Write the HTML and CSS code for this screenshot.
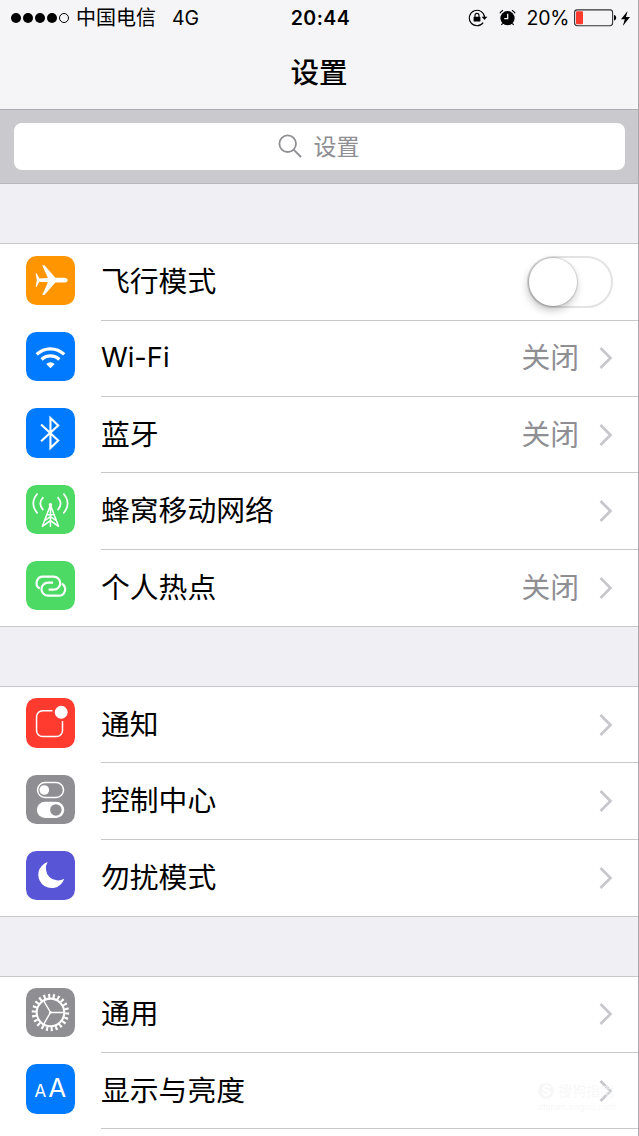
FILE: index.html
```html
<!DOCTYPE html>
<html lang="zh-CN">
<head>
  <meta charset="utf-8">
  <meta name="viewport" content="width=device-width, initial-scale=1.0">
  <title>设置</title>
  <link rel="stylesheet" href="styles.css">
</head>
<body>
<div class="phone">

  <!-- Status bar + title -->
  <header class="navbar">
    <div class="status">
      <div class="status-left">
        <span class="signal"><i></i><i></i><i></i><i></i><i class="empty"></i></span>
        <span class="carrier">中国电信</span>
        <span class="network">4G</span>
      </div>
      <span class="clock">20:44</span>
      <div class="status-right">
        <svg class="lock" width="20" height="18" viewBox="0 0 20 18">
          <path d="M15.2 13.6A7.7 7.7 0 1 1 16.7 8.6" fill="none" stroke="#000" stroke-width="1.1"/>
          <path d="M13.6 7.800h5.800l-2.900 3.200z"/>
          <rect x="5.600" y="7.800" width="6.800" height="4.800" rx=".6"/>
          <path d="M7 8V6.400a2 2 0 0 1 4 0V8" fill="none" stroke="#000" stroke-width="1.100"/>
        </svg>
        <svg class="alarm" width="17" height="18" viewBox="0 0 17 18">
          <circle cx="8.500" cy="9.200" r="7.100"/>
          <path d="M.8 4.200A9 9 0 0 1 4 1.200M16.200 4.200A9 9 0 0 0 13 1.200M3.600 14.400l-1.200 1.600M13.400 14.400l1.200 1.600" fill="none" stroke="#000" stroke-width="1.200"/>
          <path d="M8.700 4.800v4.800H5.200" fill="none" stroke="#f5f5f7" stroke-width="1.300"/>
        </svg>
        <span class="percent">20%</span>
        <svg class="battery" width="43" height="18" viewBox="0 0 43 18">
          <rect x=".6" y=".9" width="38" height="15.800" rx="2.600" fill="none" stroke="#333" stroke-width="1.100"/>
          <rect x="2" y="2.300" width="7" height="13" rx="1" fill="#ff3b30"/>
          <path d="M40 6v5.600c1.400-.3 2.200-1.400 2.200-2.800S41.400 6.300 40 6z"/>
        </svg>
        <svg class="bolt" width="9" height="15" viewBox="0 0 9 15">
          <path d="M6.600 0L0 8.300h3.800L1.800 15 9 6H5z"/>
        </svg>
      </div>
    </div>
    <h1>设置</h1>
  </header>

  <!-- Search -->
  <div class="search">
    <div class="search-field">
      <svg width="24" height="24" viewBox="0 0 24 24">
        <circle cx="9.700" cy="9.700" r="8.300"/>
        <path d="M15.600 15.600L23 23"/>
      </svg>
      <span>设置</span>
    </div>
  </div>

  <main>
    <section class="group">
      <div class="row">
        <svg class="icon orange" viewBox="0 0 49 49">
          <path d="M41.400 24c0-1.400-1.500-2.300-3.500-2.300h-8.700L18.300 9.300h-2.200l5.700 12.500-8.600.5-2.400-4.800H9.600L10.700 24 9.600 30.500h1.200l2.400-4.800 8.600.5-5.700 12.500h2.200l10.900-12.400h8.700c2 0 3.500-.9 3.500-2.300z" fill="#fff"/>
        </svg>
        <div class="row-body">
          <span class="label">飞行模式</span>
          <span class="switch"><span class="knob"></span></span>
        </div>
      </div>
      <div class="row">
        <svg class="icon blue" viewBox="0 0 49 49">
          <g fill="none" stroke="#fff" stroke-width="3.300">
            <path d="M10.600 22.300a19.600 19.600 0 0 1 27.400 0"/>
            <path d="M15.500 27.300a12.500 12.500 0 0 1 17.600 0"/>
          </g>
          <path d="M24.300 36l-4.200-4.200a6 6 0 0 1 8.400 0z" fill="#fff"/>
        </svg>
        <div class="row-body">
          <span class="label latin">Wi-Fi</span>
          <span class="value">关闭</span>
          <svg class="chevron" viewBox="0 0 14 24"><path d="M1.500 2l10 10-10 10"/></svg>
        </div>
      </div>
      <div class="row">
        <svg class="icon blue" viewBox="0 0 49 49">
          <path d="M15 16.500l17 15.800-7.700 7.400V10L32 17.300 15 33" fill="none" stroke="#fff" stroke-width="2.100"/>
        </svg>
        <div class="row-body">
          <span class="label">蓝牙</span>
          <span class="value">关闭</span>
          <svg class="chevron" viewBox="0 0 14 24"><path d="M1.500 2l10 10-10 10"/></svg>
        </div>
      </div>
      <div class="row">
        <svg class="icon green" viewBox="0 0 49 49">
          <g fill="none" stroke="#fff" stroke-width="1.700">
            <path d="M11.500 8.500q-8.500 9.800 0 19.800M37.100 8.500q8.500 9.800 0 19.800M17.200 12q-6 6.500 0 13M31.400 12q6 6.500 0 13"/>
            <path d="M24.300 19v22.700M24.300 20l-8.200 21.500M24.300 20l8.200 21.500M20.800 29.500h7M18.500 35.500l5.800-4 5.800 4M16 41.300l8.300-6 8.300 6" stroke-width="1.500"/>
          </g>
          <circle cx="24.300" cy="19.600" r="1.800" fill="#fff"/>
        </svg>
        <div class="row-body">
          <span class="label">蜂窝移动网络</span>
          <svg class="chevron" viewBox="0 0 14 24"><path d="M1.500 2l10 10-10 10"/></svg>
        </div>
      </div>
      <div class="row">
        <svg class="icon green" viewBox="0 0 49 49">
          <g fill="none" stroke="#fff" stroke-width="2.200">
            <path d="M13.700 27.400A6.400 6.400 0 0 1 17.500 15.500H27.500a6.500 6.500 0 0 1 0 13H22.500"/>
            <path d="M35.700 22.600A6.400 6.400 0 0 1 31.900 34.500H21.900a6.500 6.500 0 0 1 0-13H26.900"/>
          </g>
        </svg>
        <div class="row-body">
          <span class="label">个人热点</span>
          <span class="value">关闭</span>
          <svg class="chevron" viewBox="0 0 14 24"><path d="M1.500 2l10 10-10 10"/></svg>
        </div>
      </div>
    </section>

    <section class="group">
      <div class="row">
        <svg class="icon red" viewBox="0 0 49 49">
          <path d="M26.300 12.700H16.500a6 6 0 0 0-6 6V32.300a6 6 0 0 0 6 6H30.300a6 6 0 0 0 6-6V22.800" fill="none" stroke="#fff" stroke-width="1.500"/>
          <circle cx="35" cy="14.200" r="6.400" fill="#fff"/>
        </svg>
        <div class="row-body">
          <span class="label">通知</span>
          <svg class="chevron" viewBox="0 0 14 24"><path d="M1.500 2l10 10-10 10"/></svg>
        </div>
      </div>
      <div class="row">
        <svg class="icon gray" viewBox="0 0 49 49">
          <rect x="11.500" y="7.500" width="25.800" height="14.800" rx="7.400" fill="none" stroke="#fff" stroke-width="1.500"/>
          <circle cx="18.200" cy="14.900" r="4.800" fill="#fff"/>
          <rect x="10.800" y="26.700" width="27.200" height="16" rx="8" fill="#fff"/>
          <circle cx="29.700" cy="34.700" r="5.700" fill="#8e8e93"/>
        </svg>
        <div class="row-body">
          <span class="label">控制中心</span>
          <svg class="chevron" viewBox="0 0 14 24"><path d="M1.500 2l10 10-10 10"/></svg>
        </div>
      </div>
      <div class="row">
        <svg class="icon purple" viewBox="0 0 49 49">
          <path d="M21.500 11A13.200 13.200 0 1 0 38 27.500A12 12 0 0 1 21.500 11z" fill="#fff"/>
        </svg>
        <div class="row-body">
          <span class="label">勿扰模式</span>
          <svg class="chevron" viewBox="0 0 14 24"><path d="M1.500 2l10 10-10 10"/></svg>
        </div>
      </div>
    </section>

    <section class="group">
      <div class="row">
        <svg class="icon gray" viewBox="0 0 49 49">
          <g fill="none" stroke="#fff">
            <circle cx="24.300" cy="24.300" r="16.500" stroke-width="4.200" pathLength="44" stroke-dasharray="0.900 1.100"/>
            <circle cx="24.300" cy="24.300" r="13.700" stroke-width="2.100"/>
            <path d="M24.300 24.300H38M24.300 24.300l-6.800-11.800M24.300 24.300l-6.800 11.800" stroke-width="1.400"/>
          </g>
          <circle cx="24.300" cy="24.300" r="1.300" fill="#fff"/>
        </svg>
        <div class="row-body">
          <span class="label">通用</span>
          <svg class="chevron" viewBox="0 0 14 24"><path d="M1.500 2l10 10-10 10"/></svg>
        </div>
      </div>
      <div class="row">
        <div class="icon blue letters"><span>A</span><span class="big">A</span></div>
        <div class="row-body">
          <span class="label">显示与亮度</span>
          <svg class="chevron" viewBox="0 0 14 24"><path d="M1.500 2l10 10-10 10"/></svg>
          <div class="watermark">
            <div class="brand"><b>S</b><span>搜狗指南</span></div>
            <div class="site">zhinan.sogou.com</div>
          </div>
        </div>
      </div>
      <!-- next row, below the fold -->
      <div class="row"></div>
    </section>
  </main>
</div>
</body>
</html>
```
FILE: styles.css
```css
:root {
  --bg: #efeff4;
  --bar: #f5f5f7;
  --line: #c8c7cc;
  --muted: #8e8e93;
}

* { box-sizing: border-box; }
body {
  margin: 0;
  font-family: Inter, "Noto Sans CJK SC", sans-serif;
  background: var(--bg);
  color: #000;
}
svg { display: block; flex: none; }

.phone {
  width: 639px;
  height: 1136px;
  overflow: hidden;
  border-right: 1px solid #a9a9ad;
  background: var(--bg);
}

/* ---------- Status bar + title ---------- */
.navbar {
  height: 110px;
  background: var(--bar);
  border-bottom: 1px solid #acacb0;
}
.status {
  display: grid;
  grid-template-columns: 1fr auto 1fr;
  align-items: center;
  height: 36px;
  padding: 0 8px 0 11px;
  font-size: 20px;
  line-height: 36px;
}
.status-left,
.status-right {
  display: flex;
  align-items: center;
}
.status-right { justify-content: flex-end; }
.signal { display: flex; gap: 2px; }
.signal i {
  width: 10px;
  height: 10px;
  border-radius: 50%;
  background: #000;
}
.signal .empty {
  background: none;
  border: 1px solid #000;
}
.carrier { margin-left: 7px; }
.network {
  margin-left: 16px;
  font-size: 19.500px;
}
.clock {
  font-size: 19.500px;
  font-weight: 600;
  letter-spacing: .5px;
}
.alarm { margin-left: 11px; }
.percent {
  margin-left: 11px;
  font-size: 19.500px;
  letter-spacing: -.3px;
}
.battery { margin-left: 5px; }
.bolt { margin-left: 4px; }
h1 {
  margin: 0;
  font-size: 28.500px;
  font-weight: 500;
  line-height: 73px;
  text-align: center;
}

/* ---------- Search ---------- */
.search {
  height: 74px;
  padding: 13px 13px 0 14px;
  background: #c9c9ce;
  border-bottom: 1px solid #b7b7bc;
}
.search-field {
  display: flex;
  align-items: center;
  justify-content: center;
  gap: 12px;
  height: 47px;
  padding: 0 2px 2px 0;
  border-radius: 8px;
  background: #fff;
  color: var(--muted);
  font-size: 23px;
}
.search-field svg {
  fill: none;
  stroke: var(--muted);
  stroke-width: 1.800;
}
.search-field span { margin-top: -2px; }

/* ---------- Lists ---------- */
.group {
  margin-top: 59.200px;
  background: #fff;
  border-top: 1px solid var(--line);
  border-bottom: 1px solid var(--line);
}
.row {
  display: flex;
  height: 76.400px;
  padding-left: 25.700px;
}
.row:last-child { height: 75.900px; }
.icon {
  width: 49.300px;
  height: 49.300px;
  margin-top: 11.400px;
  border-radius: 10.500px;
}
.orange { background: #ff9500; }
.blue { background: #007aff; }
.green { background: #4cd964; }
.red { background: #ff3b30; }
.gray { background: #8e8e93; }
.purple { background: #5856d6; }

.letters {
  display: flex;
  flex: none;
  align-items: baseline;
  justify-content: center;
  gap: 2px;
  color: #fff;
  font-size: 17px;
  line-height: 48px;
}
.letters .big { font-size: 26px; }

.row-body {
  position: relative;
  display: flex;
  flex: 1;
  align-items: center;
  margin-left: 26px;
  padding-right: 25px;
  border-bottom: 1px solid var(--line);
  font-size: 28.800px;
  line-height: 40px;
}
.row:last-child .row-body { border-bottom: 0; }
.label { flex: 1; }
.latin {
  font-size: 27.200px;
}
.value {
  color: var(--muted);
  margin-right: 20px;
}
.chevron {
  width: 14px;
  height: 24px;
  fill: none;
  stroke: #c7c7cc;
  stroke-width: 2.700;
}

.switch {
  width: 86px;
  height: 52px;
  border: 2px solid #e3e3e5;
  border-radius: 26px;
}
.knob {
  display: block;
  width: 48px;
  height: 48px;
  border-radius: 50%;
  background: #fff;
  box-shadow: 0 0 1px 1px rgba(0, 0, 0, .15), -1px 4px 8px rgba(0, 0, 0, .25);
}

/* faint site mark over the last row */
.watermark {
  position: absolute;
  right: 22px;
  bottom: 17px;
  width: 78px;
  color: rgba(244, 244, 245, .7);
  line-height: 1;
}
.brand {
  display: flex;
  align-items: center;
  gap: 4px;
  font-size: 14px;
}
.brand b {
  width: 16px;
  height: 16px;
  border-radius: 50%;
  background: rgba(244, 244, 245, .7);
  color: #fff;
  line-height: 16px;
  text-align: center;
}
.site {
  margin-top: 3px;
  font-size: 9px;
}
```
